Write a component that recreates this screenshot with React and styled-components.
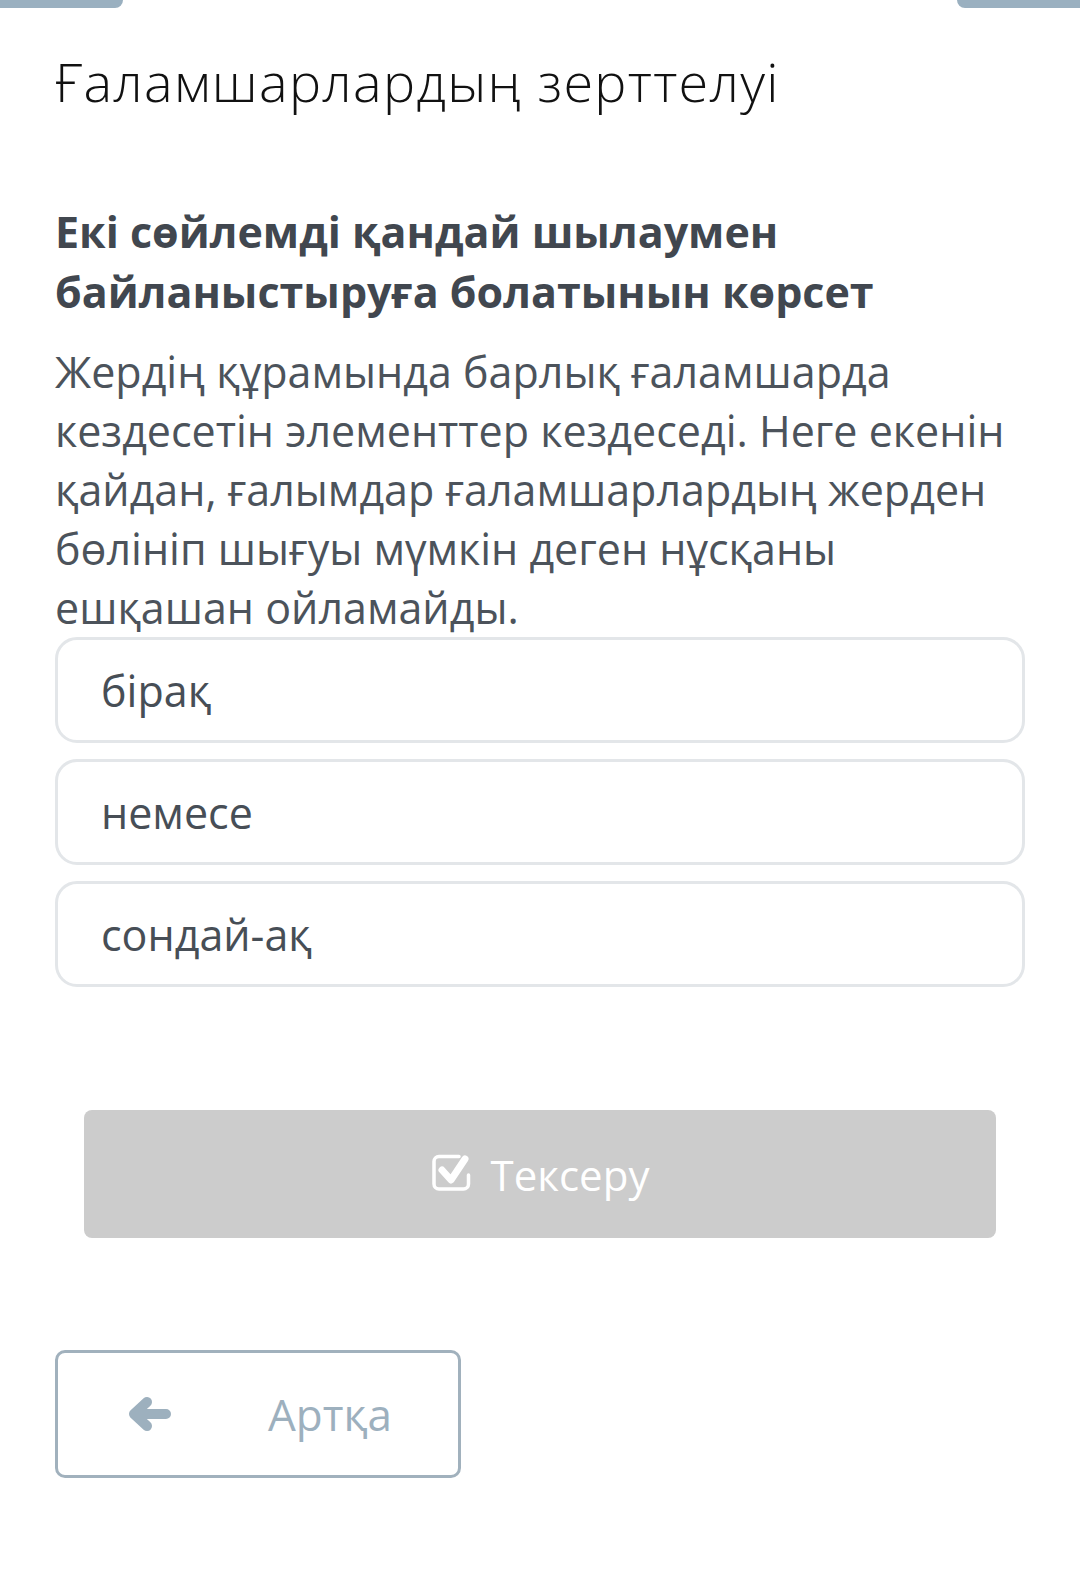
import styled, { createGlobalStyle } from 'styled-components';

const options = ['бірақ', 'немесе', 'сондай-ақ'];

function CheckSquareIcon() {
  return (
    <svg width="44" height="42" viewBox="0 0 44 42" fill="none" stroke="currentColor">
      <path
        d="M28 4.5 H8 a5 5 0 0 0 -5 5 V32 a5 5 0 0 0 5 5 H32.5 a5 5 0 0 0 5 -5 V23"
        strokeWidth="3.5"
        strokeLinecap="round"
      />
      <polyline
        points="11,18 20,28 34,7"
        strokeWidth="7"
        strokeLinecap="round"
        strokeLinejoin="round"
      />
    </svg>
  );
}

function ArrowLeftIcon() {
  return (
    <svg width="44" height="36" viewBox="0 0 44 36" fill="none" stroke="currentColor">
      <path
        d="M38 18 H7 M19 6 L6 18 L19 30"
        strokeWidth="10"
        strokeLinecap="round"
        strokeLinejoin="round"
      />
    </svg>
  );
}

export default function App() {
  return (
    <>
      <GlobalStyle />
      <Page>
        <TopBar>
          <Tab side="left" />
          <Tab side="right" />
        </TopBar>

        <Content>
          <Title>Ғаламшарлардың зерттелуі</Title>

          <Question>
            Екі сөйлемді қандай шылаумен
            <br />
            байланыстыруға болатынын көрсет
          </Question>

          <Paragraph>
            Жердің құрамында барлық ғаламшарда кездесетін элементтер
            кездеседі. Неге екенін қайдан, ғалымдар ғаламшарлардың жерден
            бөлініп шығуы мүмкін деген нұсқаны ешқашан ойламайды.
          </Paragraph>

          <OptionList>
            {options.map((o) => (
              <Option key={o}>{o}</Option>
            ))}
          </OptionList>

          <CheckButton disabled>
            <CheckSquareIcon />
            <span>Тексеру</span>
          </CheckButton>

          <BackButton>
            <ArrowLeftIcon />
            <span>Артқа</span>
          </BackButton>
        </Content>
      </Page>
    </>
  );
}

const GlobalStyle = createGlobalStyle`
  html, body {
    margin: 0;
    padding: 0;
    background: #fff;
  }
  body {
    font-family: "Open Sans", "Noto Sans", sans-serif;
  }
`;

const Page = styled.div`
  width: 1080px;
  min-height: 1588px;
  background: #fff;
`;

const TopBar = styled.div`
  display: flex;
  justify-content: space-between;
  height: 8px;
`;

const Tab = styled.div`
  width: 123px;
  height: 8px;
  background: #9ab0c0;
  border-radius: ${(p) => (p.side === 'left' ? '0 0 12px 0' : '0 0 0 12px')};
`;

const Content = styled.div`
  display: flex;
  flex-direction: column;
  padding: 43px 55px 0 55px;
`;

const Title = styled.h1`
  margin: 0;
  font-size: 54px;
  font-weight: 300;
  line-height: 60px;
  color: #111;
  letter-spacing: 1.3px;
`;

const Question = styled.h2`
  margin: 91px 0 0 0;
  font-size: 43px;
  font-weight: 700;
  line-height: 60px;
  color: #41474f;
`;

const Paragraph = styled.p`
  margin: 20px 0 0 0;
  font-size: 43px;
  font-weight: 400;
  line-height: 59px;
  color: #4c535b;
`;

const OptionList = styled.div`
  display: flex;
  flex-direction: column;
  gap: 16px;
  width: 970px;
`;

const Option = styled.div`
  height: 106px;
  box-sizing: border-box;
  display: flex;
  align-items: center;
  padding-left: 43px;
  border: 3px solid #e3e6e9;
  border-radius: 22px;
  font-size: 43px;
  color: #474e56;
`;

const CheckButton = styled.button`
  margin: 123px 0 0 29px;
  width: 912px;
  height: 128px;
  border: none;
  border-radius: 8px;
  background: #cccccc;
  color: #fff;
  display: flex;
  align-items: center;
  justify-content: center;
  gap: 16px;
  font-family: inherit;
  font-size: 42px;
  font-weight: 400;

  svg {
    margin-top: -2px;
  }
`;

const BackButton = styled.button`
  margin-top: 112px;
  width: 406px;
  height: 128px;
  box-sizing: border-box;
  border: 3px solid #a1b1bd;
  border-radius: 10px;
  background: #fff;
  color: #9db0be;
  display: flex;
  align-items: center;
  padding: 0 0 0 70px;
  gap: 96px;
  font-family: inherit;
  font-size: 44px;
  font-weight: 400;
`;
